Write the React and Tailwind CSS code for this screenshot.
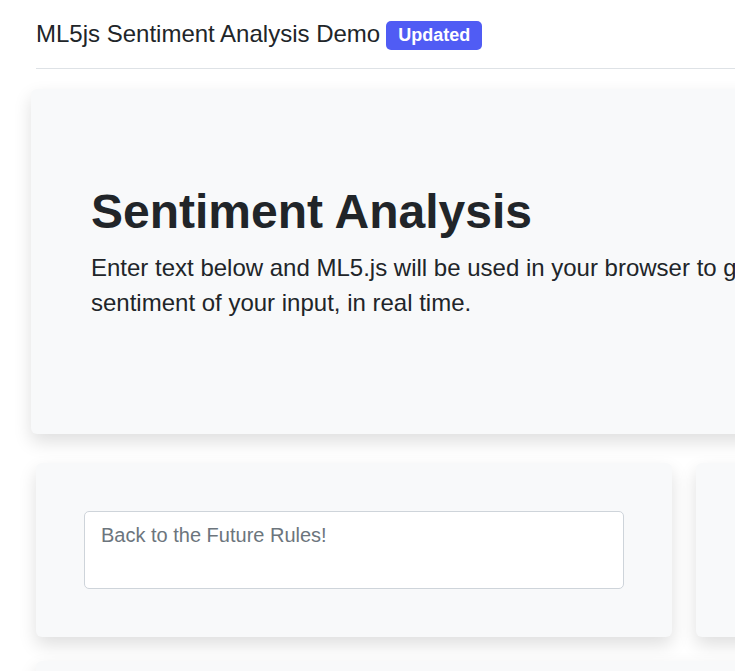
import React from 'react';

function Card({ children, className = '' }) {
  return (
    <div className={`rounded-md bg-[#f8f9fa] shadow-[0_8px_18px_rgba(0,0,0,0.13)] ${className}`}>
      {children}
    </div>
  );
}

export default function App() {
  return (
    <div className="h-screen w-full overflow-hidden bg-white font-['Liberation_Sans',Arial,sans-serif] text-[#212529]">
      <div className="w-[1400px] pl-9">
        {/* Header */}
        <div className="flex items-center border-b border-[#dee2e6] py-4">
          <h1 className="text-[24px] leading-[36px] font-normal">ML5js Sentiment Analysis Demo</h1>
          <span className="ml-[6px] mt-[3px] flex h-[29px] items-center rounded-[5px] bg-[#505cf4] px-3 text-[18px] font-bold text-white">
            Updated
          </span>
        </div>

        {/* Hero */}
        <Card className="-ml-[5px] mt-5 w-[1150px] pl-[60px] pt-[94px] pb-[114px]">
          <h2 className="text-[48px] leading-[57.6px] font-bold">Sentiment Analysis</h2>
          <p className="mt-[9px] text-[24px] leading-[35px]">
            Enter text below and ML5.js will be used in your browser to generate the sentiment
            <br />
            sentiment of your input, in real time.
          </p>
        </Card>

        {/* Input row */}
        <div className="mt-[29px] grid grid-cols-[636px_636px] gap-6">
          <Card className="p-12">
            <textarea
              rows={2}
              placeholder="Back to the Future Rules!"
              className="block h-[78px] w-full resize-none rounded-[5px] border border-[#ced4da] bg-white px-4 py-2 text-[20px] leading-[30px] text-[#495057] placeholder-[#6c757d] outline-none"
            />
          </Card>
          <Card className="p-12">
            <div className="h-[78px]" />
          </Card>
        </div>

        {/* Next row */}
        <div className="mt-6 grid grid-cols-[1296px] gap-6">
          <Card className="h-[160px]" />
        </div>
      </div>
    </div>
  );
}
